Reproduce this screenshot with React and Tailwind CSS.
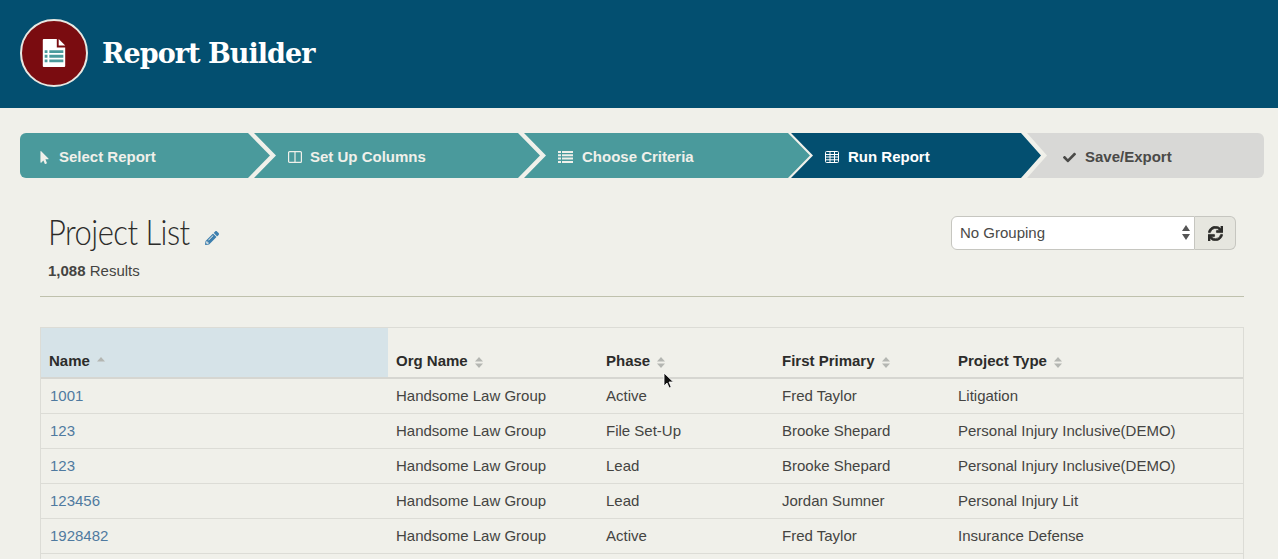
import { FaMousePointer, FaCheck, FaPencilAlt, FaSync } from 'react-icons/fa';

const rows = [
  ['1001', 'Handsome Law Group', 'Active', 'Fred Taylor', 'Litigation'],
  ['123', 'Handsome Law Group', 'File Set-Up', 'Brooke Shepard', 'Personal Injury Inclusive(DEMO)'],
  ['123', 'Handsome Law Group', 'Lead', 'Brooke Shepard', 'Personal Injury Inclusive(DEMO)'],
  ['123456', 'Handsome Law Group', 'Lead', 'Jordan Sumner', 'Personal Injury Lit'],
  ['1928482', 'Handsome Law Group', 'Active', 'Fred Taylor', 'Insurance Defense'],
];

function ColumnsIcon() {
  return (
    <svg width="14" height="12" viewBox="0 0 14 12" fill="none" stroke="currentColor" strokeWidth="1.2">
      <rect x="0.6" y="0.6" width="12.8" height="10.8" rx="1" />
      <path d="M7 1v10" />
    </svg>
  );
}

function ListIcon() {
  return (
    <svg width="15" height="12" viewBox="0 0 15 12" fill="currentColor">
      <path d="M0 0h3v2H0zM4 0h11v2H4zM0 3.3h3v2H0zM4 3.3h11v2H4zM0 6.6h3v2H0zM4 6.6h11v2H4zM0 9.9h3V12H0zM4 9.9h11V12H4z" />
    </svg>
  );
}

function TableIcon() {
  return (
    <svg width="14" height="12" viewBox="0 0 14 12" fill="none" stroke="currentColor" strokeWidth="1">
      <rect x="0.5" y="0.5" width="13" height="11" rx="1" />
      <path d="M0.5 3.5h13M0.5 6h13M0.5 8.8h13M5 1v10.5M9.5 1v10.5" />
    </svg>
  );
}

function SortIcon({ up }) {
  return (
    <svg width="8" height="11" viewBox="0 0 8 11" fill="currentColor" className="ml-[7px] mt-[2px] text-[#b4b6b2]">
      <path d="M4 0l4 4.4H0z" />
      {!up && <path d="M4 11L0 6.6h8z" />}
    </svg>
  );
}

function LogoIcon() {
  return (
    <svg width="24" height="28" viewBox="0 0 24 30">
      <path d="M1 0h14v9h9v20a1 1 0 0 1-1 1H1a1 1 0 0 1-1-1V1a1 1 0 0 1 1-1z" fill="#fff" />
      <path d="M17 0l7 7h-7z" fill="#fff" />
      <path d="M2 12h3v3H2zM7 12h15v3H7zM2 17h3v3H2zM7 17h15v3H7zM2 22h3v3H2zM7 22h15v3H7z" fill="#4a9a9c" />
    </svg>
  );
}

export default function App() {
  return (
    <div className="relative h-[559px] overflow-hidden bg-[#f0f0ea] font-['Liberation_Sans',sans-serif] text-[15px] text-[#444442]">
      <header className="flex h-[108px] items-center bg-[#034f70] pl-5">
        <div className="mb-[2px] flex h-[68px] w-[68px] items-center justify-center rounded-full border-2 border-[#e8e8e2] bg-[#7a0c10]">
          <LogoIcon />
        </div>
        <h1 className="ml-[14px] font-['DejaVu_Serif',serif] text-[27px] font-bold tracking-[-0.95px] text-white">Report Builder</h1>
      </header>

      {/* steps */}
      <div className="ml-5 mr-[14px] mt-[25px] flex h-[45px] overflow-hidden rounded-md text-[15px] font-bold text-[#f0f0ea]">
        <div className="flex w-[250px] shrink-0 items-center bg-[#4a9a9c] pl-[18px] pt-[3px] [clip-path:polygon(0_0,228px_0,100%_50%,228px_100%,0_100%)]">
          <FaMousePointer size={13} />
          <span className="ml-2">Select Report</span>
        </div>
        <div className="-ml-4 flex w-[286px] shrink-0 items-center bg-[#4a9a9c] pl-[34px] pt-[3px] [clip-path:polygon(0_0,264px_0,100%_50%,264px_100%,0_100%,22px_50%)]">
          <ColumnsIcon />
          <span className="ml-2">Set Up Columns</span>
        </div>
        <div className="-ml-4 flex w-[286px] shrink-0 items-center bg-[#4a9a9c] pl-[34px] pt-[3px] [clip-path:polygon(0_0,264px_0,100%_50%,264px_100%,0_100%,22px_50%)]">
          <ListIcon />
          <span className="ml-[9px]">Choose Criteria</span>
        </div>
        <div className="-ml-[19px] flex w-[250px] shrink-0 items-center bg-[#034f70] pl-[34px] pt-[3px] text-white [clip-path:polygon(0_0,230px_0,100%_50%,230px_100%,0_100%,22px_50%)]">
          <TableIcon />
          <span className="ml-[9px]">Run Report</span>
        </div>
        <div className="-ml-[14px] flex flex-1 items-center bg-[#d8d8d6] pl-[36px] pt-[3px] text-[#4a4a48] [clip-path:polygon(0_0,100%_0,100%_100%,0_100%,20px_50%)]">
          <FaCheck size={13} />
          <span className="ml-[9px]">Save/Export</span>
        </div>
      </div>

      {/* title row */}
      <div className="ml-10 mr-[34px] mt-[36px] flex h-[83px] items-start justify-between border-b border-[#bfc1ad]">
        <div className="pl-2">
          <div className="-mt-px flex items-center">
            <h2 className="w-[157px] origin-left scale-x-[0.86] whitespace-nowrap font-['Lato',sans-serif] text-[36px] font-light leading-[36px] tracking-[-0.6px] text-[#2c2c2a]">Project List</h2>
            <FaPencilAlt size={14} className="mt-[13px] text-[#3d7fae]" />
          </div>
          <p className="mt-[12px] text-[15px] leading-5"><b>1,088</b> Results</p>
        </div>
        <div className="mr-2 mt-[2px] flex h-[34px]">
          <div className="relative w-[244px]">
            <select className="h-full w-full appearance-none rounded-l-md border border-[#c6c6c0] bg-white pl-2 text-[15px] text-[#4a4a48]">
              <option>No Grouping</option>
            </select>
            <svg width="8" height="15" viewBox="0 0 8 15" fill="#555" className="absolute right-[5px] top-[9px]">
              <path d="M4 0l4 6H0zM4 15L0 9h8z" />
            </svg>
          </div>
          <button className="flex w-[41px] items-center justify-center rounded-r-md border border-l-0 border-[#c6c6c0] bg-[#e6e6df] text-[#2c2c2a]">
            <FaSync size={15} stroke="currentColor" strokeWidth={24} />
          </button>
        </div>
      </div>

      {/* results table */}
      <div className="ml-10 mr-[34px] mt-[30px] border border-[#dcdcd6]">
        <table className="w-full table-fixed border-collapse text-left">
          <thead>
            <tr className="h-[50px] border-b-2 border-[#d6d6d1] text-[#2c2c2a]">
              <th className="w-[347px] bg-[#d6e3e8] pl-2 pt-[17px] font-bold">
                <span className="flex items-center">Name<SortIcon up /></span>
              </th>
              <th className="w-[210px] pl-2 pt-[17px] font-bold">
                <span className="flex items-center">Org Name<SortIcon /></span>
              </th>
              <th className="w-[176px] pl-2 pt-[17px] font-bold">
                <span className="flex items-center">Phase<SortIcon /></span>
              </th>
              <th className="w-[176px] pl-2 pt-[17px] font-bold">
                <span className="flex items-center">First Primary<SortIcon /></span>
              </th>
              <th className="pl-2 pt-[17px] font-bold">
                <span className="flex items-center">Project Type<SortIcon /></span>
              </th>
            </tr>
          </thead>
          <tbody>
            {rows.map((r, i) => (
              <tr key={i} className="h-[35px] border-b border-[#dcdcd6]">
                <td className="pl-[9px] pt-px text-[#4f7aa0]">{r[0]}</td>
                <td className="pl-2 pt-px">{r[1]}</td>
                <td className="pl-2 pt-px">{r[2]}</td>
                <td className="pl-2 pt-px">{r[3]}</td>
                <td className="pl-2 pt-px">{r[4]}</td>
              </tr>
            ))}
            <tr className="h-[35px]"><td colSpan={5} /></tr>
          </tbody>
        </table>
      </div>

      {/* mouse cursor from the recording */}
      <svg width="12" height="18" viewBox="0 0 12 18" className="absolute left-[663px] top-[372px]">
        <path d="M1 1v13l3-3 2.2 5 2-1-2.2-5h4.4z" fill="#111" stroke="#fff" strokeWidth="0.8" />
      </svg>
    </div>
  );
}
